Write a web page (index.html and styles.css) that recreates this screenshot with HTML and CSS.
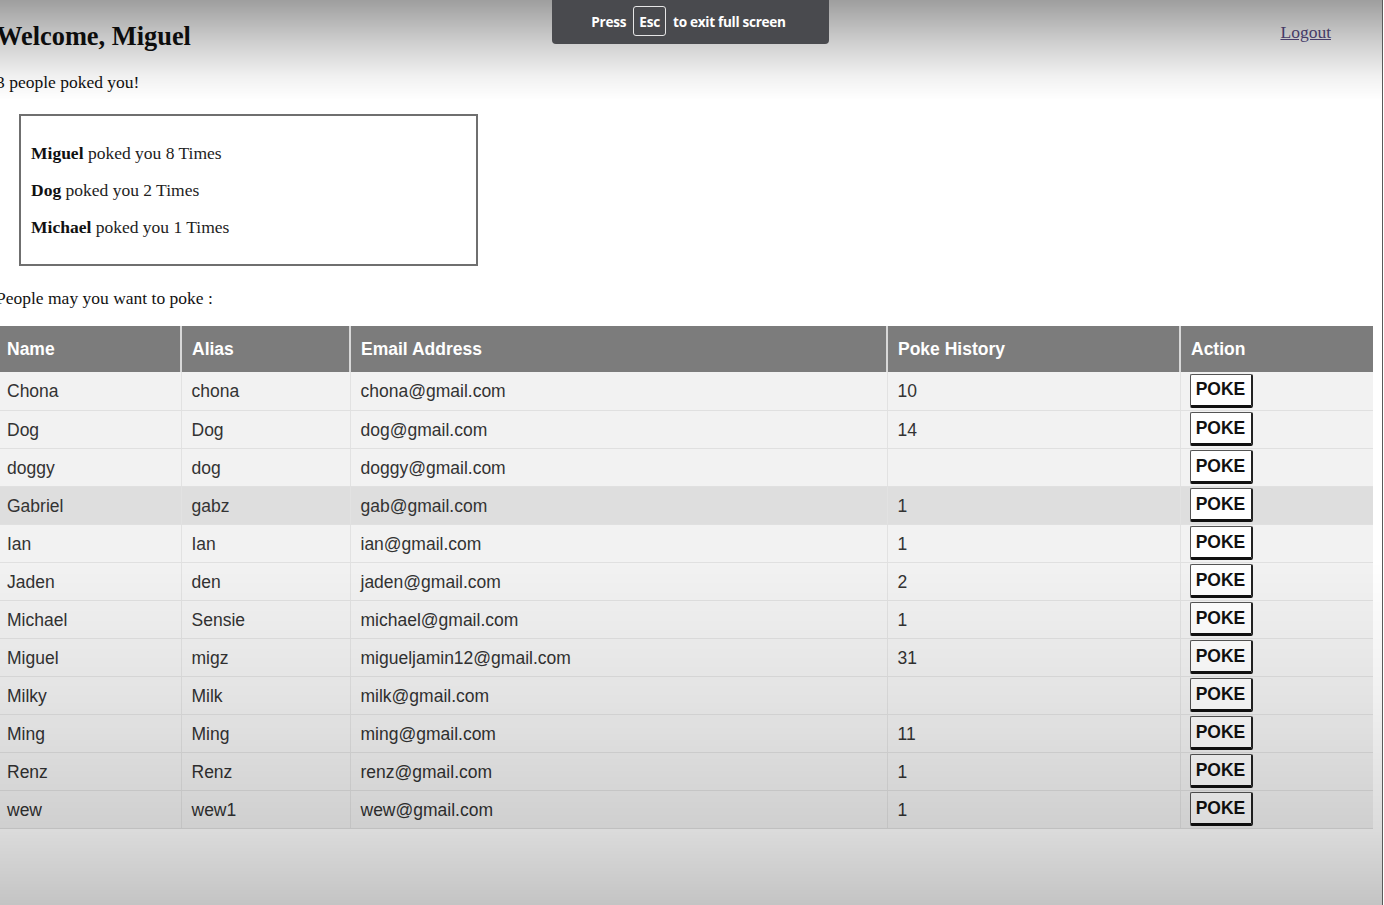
FILE: index.html
```html
<!DOCTYPE html>
<html>
<head>
<meta charset="utf-8">
<title>Poke</title>
<link rel="stylesheet" href="styles.css">
</head>
<body>
<div class="page">
  <header class="topbar">
    <h1 class="welcome">Welcome, Miguel</h1>
    <a class="logout" href="#">Logout</a>
  </header>
  <p class="count">3 people poked you!</p>
  <div class="pokes">
    <p><b>Miguel</b> poked you 8 Times</p>
    <p><b>Dog</b> poked you 2 Times</p>
    <p><b>Michael</b> poked you 1 Times</p>
  </div>
  <p class="suggest">People may you want to poke :</p>
  <table class="people">
    <colgroup>
      <col class="c-name"><col class="c-alias"><col class="c-email"><col class="c-hist"><col class="c-act">
    </colgroup>
    <thead>
      <tr><th>Name</th><th>Alias</th><th>Email Address</th><th>Poke History</th><th>Action</th></tr>
    </thead>
    <tbody>
      <tr><td>Chona</td><td>chona</td><td>chona@gmail.com</td><td>10</td><td><button class="poke">POKE</button></td></tr>
      <tr><td>Dog</td><td>Dog</td><td>dog@gmail.com</td><td>14</td><td><button class="poke">POKE</button></td></tr>
      <tr><td>doggy</td><td>dog</td><td>doggy@gmail.com</td><td></td><td><button class="poke">POKE</button></td></tr>
      <tr class="hover"><td>Gabriel</td><td>gabz</td><td>gab@gmail.com</td><td>1</td><td><button class="poke">POKE</button></td></tr>
      <tr><td>Ian</td><td>Ian</td><td>ian@gmail.com</td><td>1</td><td><button class="poke">POKE</button></td></tr>
      <tr><td>Jaden</td><td>den</td><td>jaden@gmail.com</td><td>2</td><td><button class="poke">POKE</button></td></tr>
      <tr><td>Michael</td><td>Sensie</td><td>michael@gmail.com</td><td>1</td><td><button class="poke">POKE</button></td></tr>
      <tr><td>Miguel</td><td>migz</td><td>migueljamin12@gmail.com</td><td>31</td><td><button class="poke">POKE</button></td></tr>
      <tr><td>Milky</td><td>Milk</td><td>milk@gmail.com</td><td></td><td><button class="poke">POKE</button></td></tr>
      <tr><td>Ming</td><td>Ming</td><td>ming@gmail.com</td><td>11</td><td><button class="poke">POKE</button></td></tr>
      <tr><td>Renz</td><td>Renz</td><td>renz@gmail.com</td><td>1</td><td><button class="poke">POKE</button></td></tr>
      <tr><td>wew</td><td>wew1</td><td>wew@gmail.com</td><td>1</td><td><button class="poke">POKE</button></td></tr>
    </tbody>
  </table>
</div>
<div class="vignette"></div>
<div class="fs-toast"><span>Press</span><kbd>Esc</kbd><span>to exit full screen</span></div>
</body>
</html>
```
FILE: styles.css
```css
html, body {
  margin: 0;
  padding: 0;
  background: #ffffff;
  overflow: hidden;
}
body {
  font-family: "Liberation Serif", "Times New Roman", serif;
  color: #111;
  height: 905px;
}
.page {
  width: 1373px;
}
.topbar {
  display: flex;
  justify-content: space-between;
  align-items: flex-start;
  padding-top: 21px;
  padding-right: 42px;
}
.welcome {
  margin: 0 0 0 -4px;
  font-size: 26.4px;
  line-height: 30px;
  font-weight: bold;
}
.logout {
  margin-top: 1px;
  font-size: 17.5px;
  line-height: 20px;
  color: #5a4d86;
  text-decoration: underline;
}
.count {
  margin: 21px 0 0 -4px;
  font-size: 17.5px;
  line-height: 20px;
}
.pokes {
  margin: 22px 0 0 19px;
  width: 445px;
  border: 2px solid #6f6f6f;
  padding: 19px 0 18px 10px;
}
.pokes p {
  margin: 0;
  font-size: 17.5px;
  line-height: 37px;
  color: #222;
}
.pokes b {
  color: #111;
}
.suggest {
  margin: 22px 0 0 -4px;
  font-size: 17.5px;
  line-height: 20px;
}
.people {
  margin: 18px 0 0 -3px;
  width: 1376px;
  border-collapse: collapse;
  table-layout: fixed;
  font-family: "Liberation Sans", Arial, sans-serif;
  font-size: 17.5px;
}
.c-name { width: 184px; }
.c-alias { width: 169px; }
.c-email { width: 537px; }
.c-hist { width: 293px; }
.c-act { width: 193px; }
.people th {
  height: 46px;
  background: #7c7c7c;
  color: #fff;
  text-align: left;
  font-weight: bold;
  padding: 0 10px;
  border-left: 2px solid #d8d8d8;
  box-sizing: border-box;
}
.people th:first-child, .people td:first-child {
  border-left: none;
}
.people td {
  height: 38px;
  padding: 2px 10px 0;
  background: #f2f2f2;
  color: #333;
  border-left: 1px solid #e2e2e2;
  border-bottom: 1px solid #e0e0e0;
  box-sizing: border-box;
  white-space: nowrap;
}
.people tr.hover td {
  background: #dedede;
}
.poke {
  font-family: "Liberation Sans", Arial, sans-serif;
  font-weight: bold;
  font-size: 17.5px;
  color: #111;
  background: #fff;
  height: 34px;
  width: 63px;
  padding: 0;
  margin: -2px 0 0 -1px;
  border-style: solid;
  border-width: 1.5px 2.5px 3px 1.5px;
  border-color: #555 #222 #111 #555;
  border-radius: 2px;
  vertical-align: middle;
}
.vignette {
  position: fixed;
  top: 0;
  left: 0;
  width: 1382px;
  height: 905px;
  border-right: 1px solid #5a5a5a;
  pointer-events: none;
  background: linear-gradient(to bottom,
    rgba(0,0,0,0.38) 0px,
    rgba(0,0,0,0.2) 40px,
    rgba(0,0,0,0.06) 75px,
    rgba(0,0,0,0) 100px,
    rgba(0,0,0,0) 560px,
    rgba(0,0,0,0.06) 700px,
    rgba(0,0,0,0.14) 830px,
    rgba(0,0,0,0.23) 905px);
}
.fs-toast {
  position: fixed;
  top: 0;
  left: 552px;
  width: 277px;
  height: 44px;
  box-sizing: border-box;
  background: #494a4e;
  border-radius: 0 0 4px 4px;
  display: flex;
  align-items: center;
  justify-content: center;
  gap: 7px;
  color: #fff;
  font-family: "Open Sans", "Noto Sans", sans-serif;
  font-weight: 700;
  font-size: 13.6px;
  letter-spacing: -0.3px;
  padding: 0 4px 2px 0;
}
.fs-toast kbd {
  font-family: inherit;
  display: inline-flex;
  align-items: center;
  justify-content: center;
  width: 33px;
  height: 30px;
  box-sizing: border-box;
  border: 1px solid #e6e6e6;
  border-radius: 3px;
}
```
